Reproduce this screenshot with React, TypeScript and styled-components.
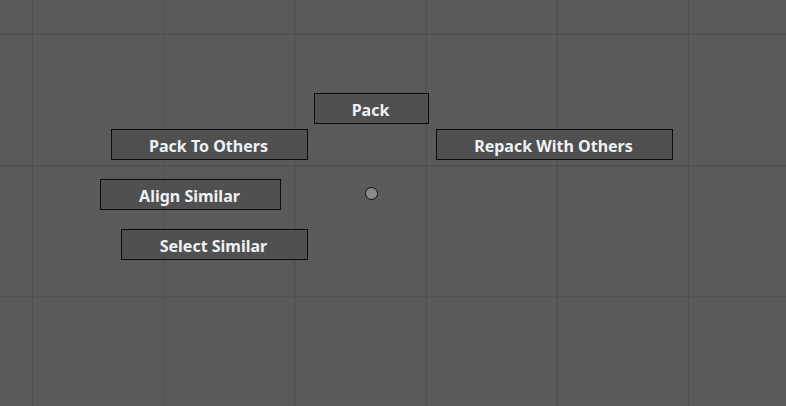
import styled, { createGlobalStyle } from 'styled-components';

const items = [
  { label: 'Pack', x: 314, y: 93, w: 115 },
  { label: 'Pack To Others', x: 111, y: 129, w: 197 },
  { label: 'Repack With Others', x: 436, y: 129, w: 237 },
  { label: 'Align Similar', x: 100, y: 179, w: 181 },
  { label: 'Select Similar', x: 121, y: 229, w: 187 },
];

function App() {
  return (
    <>
      <GlobalStyle />
      <Viewport>
        {items.map((item) => (
          <PieButton key={item.label} $x={item.x} $y={item.y} $w={item.w}>
            {item.label}
          </PieButton>
        ))}
        <PieCenter />
      </Viewport>
    </>
  );
}

const GlobalStyle = createGlobalStyle`
html, body {
  margin: 0;
  padding: 0;
  background: #5a5a5a;
}
`;

const Viewport = styled.div`
position: relative;
width: 786px;
height: 406px;
overflow: hidden;
background-color: #5a5a5a;
background-image:
  linear-gradient(to right, #4e4e4e 1px, transparent 1px),
  linear-gradient(to bottom, #4e4e4e 1px, transparent 1px);
background-size: 131.2px 131.2px;
background-position: 32px 34px;
font-family: "Noto Sans", "DejaVu Sans", sans-serif;
`;

type PieButtonProps = {
  $x: number,
  $y: number,
  $w: number,
}

const PieButton = styled.div<PieButtonProps>`
position: absolute;
left: ${p => p.$x}px;
top: ${p => p.$y}px;
width: ${p => p.$w}px;
height: 31px;
box-sizing: border-box;
border: 1px solid #0c0c0c;
background: #505050;
color: #eef2f6;
font-size: 16px;
font-weight: 700;
display: flex;
align-items: center;
justify-content: center;
padding-top: 3px;
padding-right: 2px;
`;

const PieCenter = styled.div`
position: absolute;
left: 365px;
top: 187px;
width: 13px;
height: 13px;
box-sizing: border-box;
border-radius: 50%;
border: 1px solid #111;
background: #8a8a8a;
`;

export default App;
